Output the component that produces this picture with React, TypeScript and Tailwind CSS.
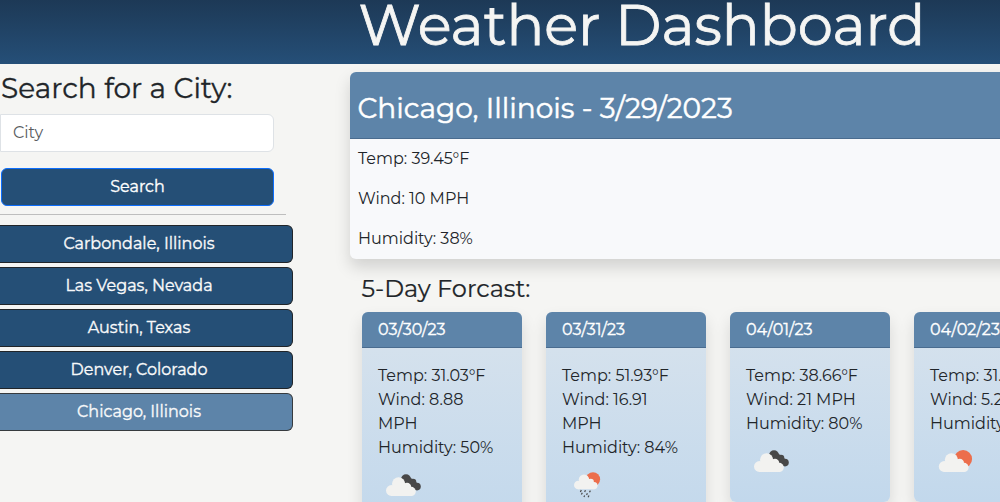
const cities = ["Carbondale, Illinois", "Las Vegas, Nevada", "Austin, Texas", "Denver, Colorado"];

type Sky = "clouds" | "rain" | "partly";

const days: { date: string; temp: string; wind: string; humidity: string; sky: Sky }[] = [
  { date: "03/30/23", temp: "31.03", wind: "8.88", humidity: "50", sky: "clouds" },
  { date: "03/31/23", temp: "51.93", wind: "16.91", humidity: "84", sky: "rain" },
  { date: "04/01/23", temp: "38.66", wind: "21", humidity: "80", sky: "clouds" },
  { date: "04/02/23", temp: "31.41", wind: "5.23", humidity: "61", sky: "partly" },
];

function Cloud() {
  return (
    <g fill="#f2f2f0">
      <circle cx="13.4" cy="30.5" r="5.4" />
      <circle cx="20.6" cy="23.8" r="6.6" />
      <circle cx="29" cy="27" r="4.2" />
      <circle cx="33.2" cy="31.4" r="4.6" />
      <path d="M13 27 L20 21 L29 25 L34 30 V36 H13 Z" />
    </g>
  );
}

function WeatherIcon({ sky }: { sky: Sky }) {
  return (
    <svg viewBox="0 0 50 50" className="block size-[50px]">
      {sky === "clouds" && (
        <>
          <g fill="#484848">
            <circle cx="28" cy="19.2" r="5" />
            <circle cx="35" cy="22" r="3.3" />
            <circle cx="39" cy="26.6" r="3.8" />
            <path d="M25 20 L31 17 L36 20 L40 24 L37 30 L33 28 Z" />
          </g>
          <Cloud />
        </>
      )}
      {sky === "partly" && (
        <g transform="translate(0.8 0)">
          <circle cx="32.3" cy="23" r="9" fill="#ec6e4c" />
          <Cloud />
        </g>
      )}
      {sky === "rain" && (
        <>
          <circle cx="31" cy="19.3" r="7.1" fill="#ec6e4c" />
          <g transform="translate(5.7 0.8) scale(0.79)">
            <Cloud />
          </g>
          <path
            d="M19.3 30l-.9 1.9M23.5 30.2l-.9 1.7M28.4 30.6l-.9 1.7M20.3 32.8l-.9 1.8M25.4 33.2l-.8 1.7M22.7 35.4l-.8 1.6M27 35.5l-.9 1.7"
            stroke="#484848"
            strokeWidth="1.2"
            fill="none"
          />
        </>
      )}
    </svg>
  );
}

export default function App() {
  return (
    <div className="h-[502px] w-[1000px] overflow-hidden bg-[#f5f5f3] font-['Montserrat','Inter',sans-serif] text-base leading-6 text-[#212529]">
      <header className="h-16 bg-linear-to-b from-[#1d3956] to-[#254f78]">
        <h1 className="pl-[358.5px] text-[56px] leading-[50px] whitespace-nowrap text-[#f5f5f3] [-webkit-text-stroke:0.8px_#f5f5f3]">
          Weather Dashboard
        </h1>
      </header>
      <div className="flex">
        <aside className="w-[350px] shrink-0">
          <h2 className="h-[50px] pt-[7px] pl-px text-[28px] leading-[34px] tracking-[0.03px] whitespace-nowrap [-webkit-text-stroke:0.3px_#212529]">
            Search for a City:
          </h2>
          <input
            placeholder="City"
            className="block h-[38px] w-[274px] rounded-r-md border border-[#dee2e6] bg-white px-3 pb-0.5 placeholder:text-[#595c5f]"
          />
          <button className="mt-4 ml-px block h-[38px] w-[273px] rounded-md border border-[#0d6efd] bg-[#254f76] pb-px text-white [-webkit-text-stroke:0.35px_white]">
            Search
          </button>
          <hr className="mt-2 w-[286px] border-[#bebebe]" />
          <div className="mt-[10px] flex w-[293px] flex-col gap-1">
            {cities.map((name) => (
              <button
                key={name}
                className="h-[38px] rounded-r-md border border-l-0 border-[#212529] bg-[#254f76] pr-[14px] pb-px text-[#f8f9fa] [-webkit-text-stroke:0.35px_#f8f9fa]"
              >
                {name}
              </button>
            ))}
            <button className="h-[38px] rounded-r-md border border-l-0 border-[#373b3e] bg-[#5d84a9] pr-[14px] pb-px text-[#f8f9fa] [-webkit-text-stroke:0.35px_#f8f9fa]">
              Chicago, Illinois
            </button>
          </div>
        </aside>
        <main className="w-[800px] shrink-0 pt-2">
          <section className="h-[187px] rounded-md bg-[#f8f9fb] shadow-[0_8px_16px_rgba(0,0,0,0.15)]">
            <h2 className="h-[67px] rounded-t-md border-b border-[#4a6c8f] bg-[#5d84a9] pt-[19px] pl-[7.5px] text-[28px] leading-[34px] whitespace-nowrap text-white [-webkit-text-stroke:0.5px_white]">
              Chicago, Illinois - 3/29/2023
            </h2>
            <div className="flex flex-col gap-4 p-2">
              <p>Temp: 39.45°F</p>
              <p>Wind: 10 MPH</p>
              <p>Humidity: 38%</p>
            </div>
          </section>
          <h3 className="mt-[15px] pl-[11.5px] text-2xl leading-[30px] [-webkit-text-stroke:0.2px_#212529]">
            5-Day Forcast:
          </h3>
          <div className="mt-2 ml-3 flex items-start gap-6">
            {days.map((d) => (
              <article
                key={d.date}
                className="w-40 shrink-0 rounded-md bg-linear-to-b from-[#d8e3ed] to-[#c2d8ec] shadow-[0_8px_16px_rgba(0,0,0,0.12)]"
              >
                <h4 className="h-9 rounded-t-md border-b border-[#4a6c8f] bg-[#5d84a9] pt-1.5 pl-4 text-white [-webkit-text-stroke:0.35px_white]">
                  {d.date}
                </h4>
                <div className="p-4">
                  <p>Temp: {d.temp}°F</p>
                  <p>Wind: {d.wind} MPH</p>
                  <p>Humidity: {d.humidity}%</p>
                  <WeatherIcon sky={d.sky} />
                </div>
              </article>
            ))}
          </div>
        </main>
      </div>
    </div>
  );
}
